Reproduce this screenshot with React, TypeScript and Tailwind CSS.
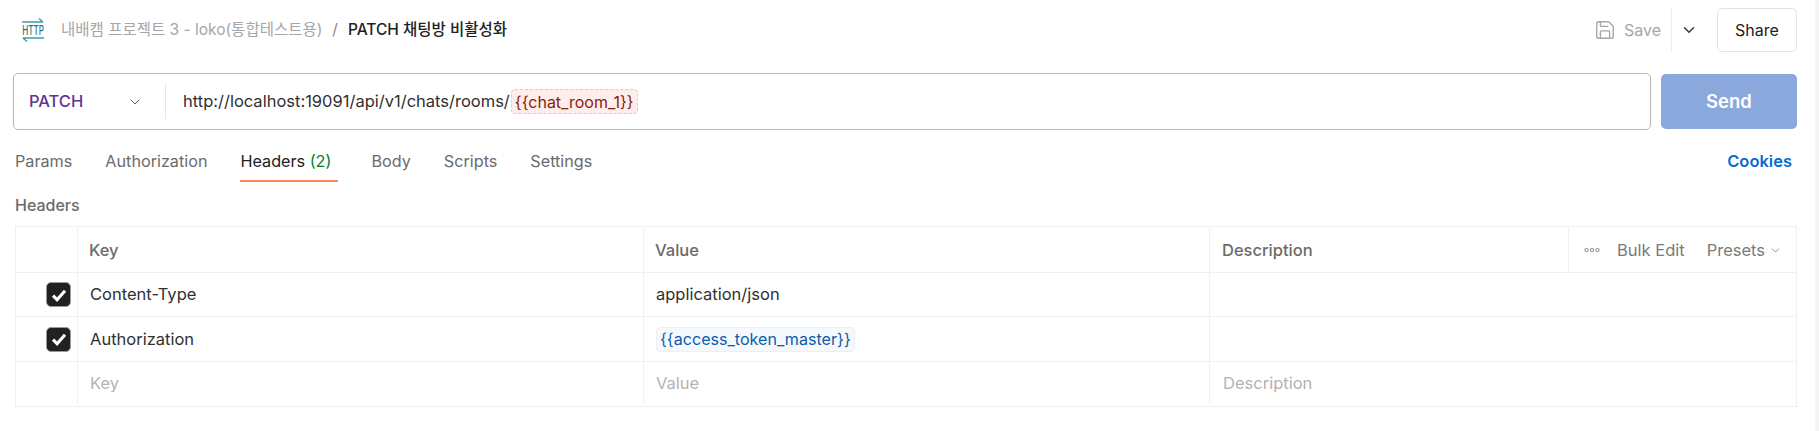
import { ChevronDown, Save } from 'lucide-react';

const font = { fontFamily: 'Inter, "Noto Sans CJK KR", sans-serif' };

function HttpIcon() {
  return (
    <svg width="24" height="26" viewBox="0 0 24 26" className="shrink-0">
      <path d="M1 5h21M18 1.5L22 5" fill="none" stroke="#3f9aa3" strokeWidth="1.4" />
      <path d="M23 21H2M6 24.5L2 21" fill="none" stroke="#3f9aa3" strokeWidth="1.4" />
      <text transform="translate(12 17.5) scale(0.62 1)" textAnchor="middle" fontSize="13" fontWeight="500" fill="#1f7584" fontFamily="Inter, sans-serif">
        HTTP
      </text>
    </svg>
  );
}

function Checkbox() {
  return (
    <div className="w-[25px] h-[25px] rounded-[5px] bg-[#212121] border border-[#9a9a9a] flex items-center justify-center">
      <svg width="18" height="18" viewBox="0 0 15 15" fill="none">
        <path d="M2.5 8l3.4 3.4L12.5 4" stroke="#fff" strokeWidth="2.6" />
      </svg>
    </div>
  );
}

function Row({ check, first, second, third, className }: { check?: boolean; first: React.ReactNode; second: React.ReactNode; third?: React.ReactNode; className: string }) {
  return (
    <div className={`flex border-[#f0f0f0] ${className}`}>
      <div className="w-[62px] shrink-0 border-r border-[#f0f0f0] flex items-center justify-end pr-[6px]">{check && <Checkbox />}</div>
      <div className="w-[566px] shrink-0 border-r border-[#f0f0f0] pl-[12px] flex items-center">{first}</div>
      <div className="w-[566px] shrink-0 border-r border-[#f0f0f0] pl-[12px] flex items-center">{second}</div>
      <div className="flex-1 pl-[13px] flex items-center">{third}</div>
    </div>
  );
}

export default function App() {
  const tabs = ['Params', 'Authorization'];
  return (
    <div style={font} className="w-[1819px] h-[431px] bg-white flex overflow-hidden text-[16.5px]">
      <div className="w-[1815px] shrink-0">
        {/* breadcrumb bar */}
        <div className="h-[44px] mt-[8px] pl-[21px] pr-[18px] flex items-center">
          <HttpIcon />
          <span className="ml-[16px] text-[#a6a6a6] text-[15.5px]">내배캠 프로젝트 3 - loko(통합테스트용)</span>
          <span className="ml-[10px] text-[#8a8a8a] text-[15.5px]">/</span>
          <span className="ml-[10px] text-[#212121] text-[15.5px] font-medium">PATCH 채팅방 비활성화</span>
          <div className="ml-auto flex items-center h-full">
            <Save className="w-[22px] h-[22px] text-[#a6a6a6]" strokeWidth={1.5} />
            <span className="ml-[8px] text-[#a6a6a6] text-[16px]">Save</span>
            <div className="ml-[10px] h-[44px] w-px bg-[#ededed]" />
            <ChevronDown className="ml-[8px] w-[18px] h-[18px] text-[#3b3b3b]" />
            <button className="ml-[19px] w-[80px] h-[44px] rounded-[5px] border border-[#e3e3e3] text-[#212121] text-[16px]">Share</button>
          </div>
        </div>

        {/* url bar */}
        <div className="mt-[21px] pl-[13px] pr-[18px] flex gap-[10px]">
          <div className="flex-1 h-[57px] rounded-[5px] border border-[#b8b8b8] flex items-center">
            <span className="ml-[15px] w-[98px] text-[#623497] font-medium">PATCH</span>
            <ChevronDown className="w-[16px] h-[16px] text-[#5c5c5c]" strokeWidth={1.5} />
            <div className="ml-[22px] h-[35px] w-px bg-[#e6e6e6]" />
            <span className="ml-[17px] text-[#303030]">http://localhost:19091/api/v1/chats/rooms/</span>
            <span className="ml-[1px] px-[3px] h-[25px] flex items-center rounded-[4px] bg-[#fdeeec] border border-dashed border-[#f6c3bc] text-[#8e1a10] text-[16px]">{'{{chat_room_1}}'}</span>
          </div>
          <button className="w-[136px] h-[55px] mt-px rounded-[5px] bg-[#8aa8dc] text-white font-semibold text-[18.5px]">Send</button>
        </div>

        {/* tabs */}
        <div className="mt-[14px] pl-[15px] pr-[23px] h-[38px] flex items-start text-[#6b6b6b] text-[16.2px]">
          {tabs.map((t) => (
            <span key={t} className="mr-[33px] pt-[5px]">{t}</span>
          ))}
          <div className="mr-[33px] pt-[5px] h-[38px] border-b-2 border-[#f58a55] w-[98px] text-[#212121] whitespace-nowrap">
            Headers <span className="text-[#007f31]">(2)</span>
          </div>
          <span className="mr-[33px] pt-[5px]">Body</span>
          <span className="mr-[33px] pt-[5px]">Scripts</span>
          <span className="pt-[5px]">Settings</span>
          <span className="ml-auto pt-[5px] text-[#0b6bcb] font-semibold text-[16.5px]">Cookies</span>
        </div>

        <div className="mt-[13px] pl-[15px] font-medium text-[#6b6b6b] text-[16px] leading-[20px]">Headers</div>

        {/* table */}
        <div className="mt-[11px] ml-[15px] w-[1782px] h-[181px] border border-[#f0f0f0] flex flex-col">
          <div className="h-[46px] pt-px flex border-b border-[#f0f0f0] font-medium text-[#6b6b6b]">
            <div className="w-[62px] shrink-0 border-r border-[#f0f0f0]" />
            <div className="w-[566px] shrink-0 border-r border-[#f0f0f0] pl-[11px] flex items-center">Key</div>
            <div className="w-[566px] shrink-0 border-r border-[#f0f0f0] pl-[11px] flex items-center">Value</div>
            <div className="w-[359px] shrink-0 border-r border-[#f0f0f0] pl-[12px] flex items-center">Description</div>
            <div className="flex-1 flex items-center font-normal text-[#7a7a7a]">
              <svg width="16" height="6" viewBox="0 0 16 6" fill="none" className="ml-[15px]" stroke="#8a8a8a">
                <circle cx="2.5" cy="3" r="1.7" />
                <circle cx="8" cy="3" r="1.7" />
                <circle cx="13.5" cy="3" r="1.7" />
              </svg>
              <span className="ml-[17px]">Bulk Edit</span>
              <span className="ml-[22px]">Presets</span>
              <ChevronDown className="ml-[4px] w-[13px] h-[13px]" strokeWidth={1.5} />
            </div>
          </div>
          <Row check className="h-[44px] border-b" first={<span className="text-[#303030]">Content-Type</span>} second={<span className="text-[#303030]">application/json</span>} />
          <Row
            check
            className="h-[45px] border-b"
            first={<span className="text-[#303030]">Authorization</span>}
            second={<span className="px-[3px] h-[25px] flex items-center rounded-[4px] bg-[#f6f9fc] border border-[#ecf0f5] text-[#0b5cad] text-[16.1px]">{'{{access_token_master}}'}</span>}
          />
          <Row className="flex-1 pb-[2px]" first={<span className="text-[#b3b3b3]">Key</span>} second={<span className="text-[#b3b3b3]">Value</span>} third={<span className="text-[#b3b3b3]">Description</span>} />
        </div>
      </div>
      <div className="flex-1 bg-[#f5f5f5]" />
    </div>
  );
}
